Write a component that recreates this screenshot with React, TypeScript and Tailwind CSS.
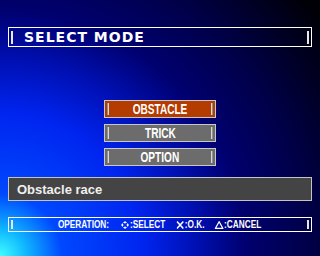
import React from "react";

const Bar = ({ className = "" }: { className?: string }) => (
  <div className={"w-[2px] bg-[#e8e8e8] " + className} />
);

const Btn = ({ label, active }: { label: string; active?: boolean }) => (
  <div
    className={
      "w-[112px] h-[18px] border border-[#c8c8c8] flex items-center justify-between px-[2px] " +
      (active ? "bg-[#b43c00]" : "bg-[#6c6c6c]")
    }
  >
    <div className="w-[2px] h-[12px] bg-[#d8d8d8] border-l border-[#909090]" />
    <span
      className="inline-block scale-x-[0.72] text-white text-[14px] leading-none font-bold"
      style={{ fontFamily: '"Liberation Sans", Arial, sans-serif' }}
    >
      {label}
    </span>
    <div className="w-[2px] h-[12px] bg-[#d8d8d8] border-r border-[#909090]" />
  </div>
);

export default function App() {
  return (
    <div
      className="w-[320px] h-[256px] overflow-hidden flex flex-col bg-[radial-gradient(circle_at_0%_100%,#40ffff_0px,#10b8ff_26px,#0048ff_62px,#0024ee_145px,#0010b4_195px,#000070_245px,#000048_310px,#000006_400px)]"
      style={{ fontFamily: '"DejaVu Sans", sans-serif' }}
    >
      <div className="mt-[27px] mx-[8px] h-[20px] border border-white flex items-center px-[2px]">
        <Bar className="h-[13px]" />
        <span
          className="ml-[11px] text-white text-[14px] leading-none font-bold tracking-[1px]"
          style={{ fontFamily: '"DejaVu Sans", sans-serif' }}
        >
          SELECT MODE
        </span>
        <div className="flex-1" />
        <Bar className="h-[13px]" />
      </div>

      <div className="mt-[53px] flex flex-col items-center gap-[6px]">
        <Btn label="OBSTACLE" active />
        <Btn label="TRICK" />
        <Btn label="OPTION" />
      </div>

      <div className="mt-[11px] mx-[8px] h-[24px] bg-[#444444] border border-[#c4c4c4] flex items-center pl-[8px]">
        <span
          className="text-[#f0f0f0] text-[13px] leading-none font-bold"
          style={{ fontFamily: '"Liberation Sans", Arial, sans-serif' }}
        >
          Obstacle race
        </span>
      </div>

      <div className="mt-[16px] mx-[8px] h-[15px] border border-white flex items-center px-[2px]">
        <Bar className="h-[9px]" />
        <div className="flex-1 flex justify-center">
          <div
            className="flex items-center scale-x-[0.75] text-white text-[11px] leading-none font-bold"
            style={{ fontFamily: '"Liberation Sans", Arial, sans-serif' }}
          >
            <span>OPERATION:</span>
            <span className="ml-[16px] flex items-center">
              <svg width="11" height="8" viewBox="0 0 8 8" preserveAspectRatio="none" className="mr-[1px]">
                <rect x="3.5" y="0" width="1" height="2.5" fill="#fff" />
                <rect x="3.5" y="5.5" width="1" height="2.5" fill="#fff" />
                <rect x="0" y="3.5" width="2.5" height="1" fill="#fff" />
                <rect x="5.5" y="3.5" width="2.5" height="1" fill="#fff" />
                <rect x="2.5" y="1" width="3" height="1" fill="#fff" />
                <rect x="2.5" y="6" width="3" height="1" fill="#fff" />
                <rect x="1" y="2.5" width="1" height="3" fill="#fff" />
                <rect x="6" y="2.5" width="1" height="3" fill="#fff" />
              </svg>
              <span>:SELECT</span>
            </span>
            <span className="ml-[15px] flex items-center">
              <svg width="10" height="8" viewBox="0 0 7 8" preserveAspectRatio="none" className="mr-[1px]">
                <path d="M0.5 0.5 L6.5 7.5 M6.5 0.5 L0.5 7.5" stroke="#fff" strokeWidth="1.4" />
              </svg>
              <span>:O.K.</span>
            </span>
            <span className="ml-[13px] flex items-center">
              <svg width="12" height="8" viewBox="0 0 9 8" preserveAspectRatio="none" className="mr-[1px]">
                <path d="M4.5 0.8 L8.2 7.3 L0.8 7.3 Z" stroke="#fff" strokeWidth="1.3" fill="none" />
              </svg>
              <span>:CANCEL</span>
            </span>
          </div>
        </div>
        <Bar className="h-[9px]" />
      </div>
    </div>
  );
}
